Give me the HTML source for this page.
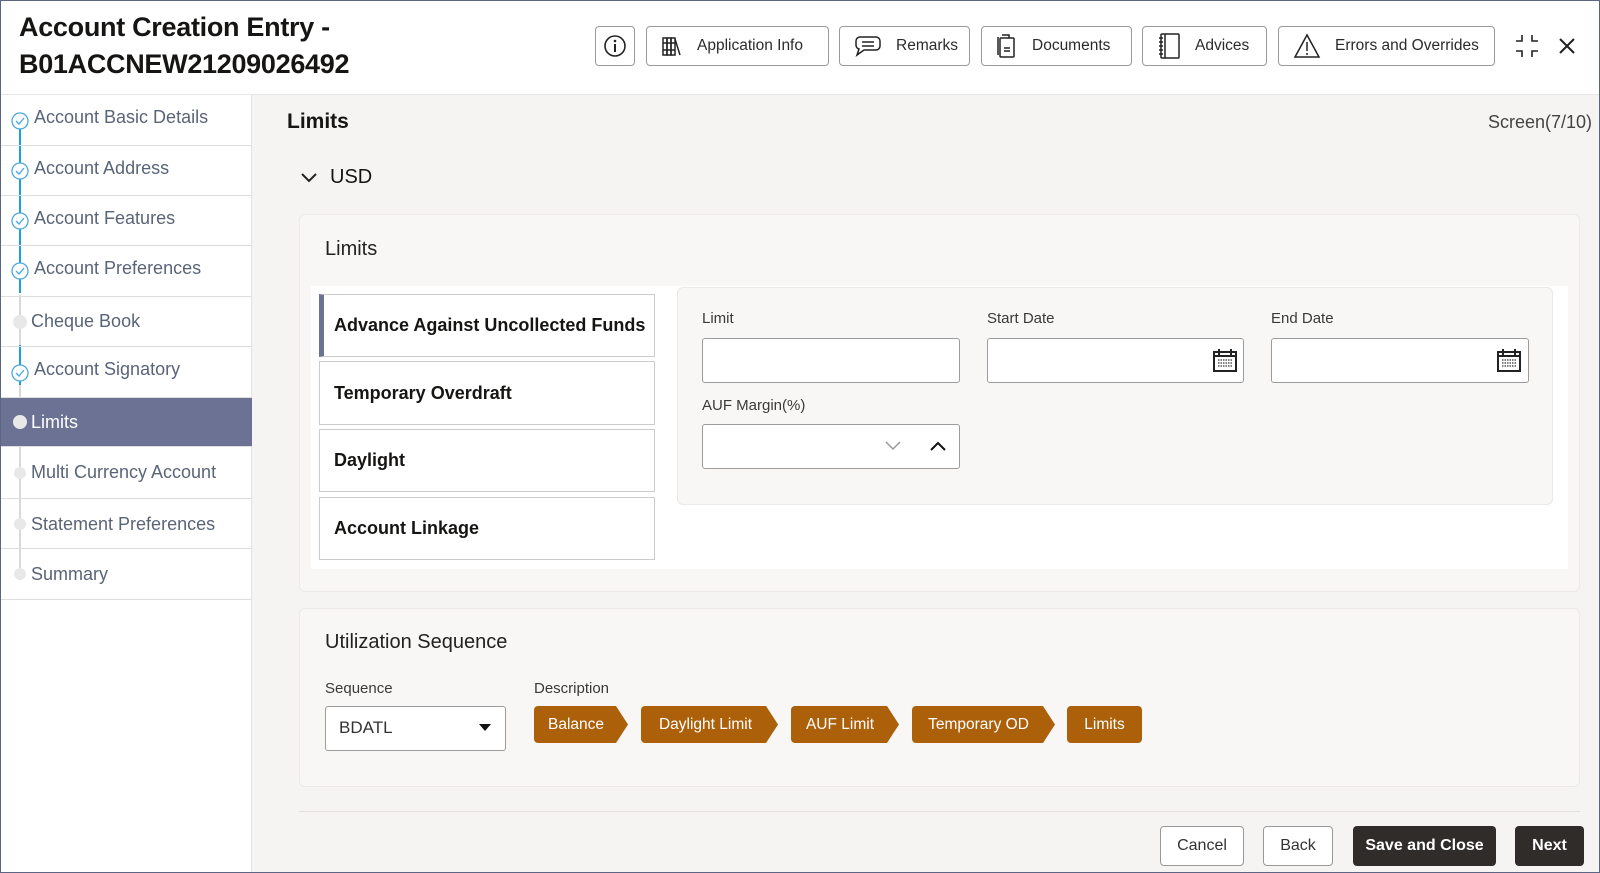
<!DOCTYPE html>
<html><head><meta charset="utf-8"><style>
*{box-sizing:border-box;margin:0;padding:0}
body{width:1600px;height:873px;overflow:hidden;font-family:"Liberation Sans",sans-serif;background:#fff;position:relative;color:#161513}
.a{position:absolute}
.frame{left:0;top:0;width:1600px;height:873px;border:1px solid #5d6585;pointer-events:none;z-index:9}
.hb{position:absolute;top:26px;height:40px;border:1px solid #9a9a9a;border-radius:4px;background:#fff;display:flex;align-items:center;font-size:15.5px;color:#2b2b2b}
.hb svg{margin:0 14px 0 14px}
.side{left:0;top:95px;width:252px;height:778px;background:#fff;border-right:1px solid #e3e3e3}
.si{position:absolute;left:0;width:252px;height:50px;border-bottom:1px solid #ddd;font-size:18px;color:#5a6478;}
.si span{position:absolute;left:34px;top:12px}
.main{left:252px;top:95px;width:1348px;height:778px;background:#f5f4f2}
.card{background:#f8f7f6;border:1px solid #ece9e6;border-radius:6px}
.tab{position:absolute;left:319px;width:336px;border:1px solid #ccc;background:#fff;font-size:18px;font-weight:bold;padding-left:14px;display:flex;align-items:center}
.lbl{position:absolute;font-size:15px;color:#3a3a3a}
.inp{position:absolute;height:45px;border:1px solid #9c9c9c;border-radius:3px;background:#fff}
.tag{position:absolute;top:706px;height:37px;background:#ad600a;color:#fff;font-size:15.5px;display:flex;align-items:center;justify-content:center;border-radius:4px 0 0 4px;clip-path:polygon(0 0,calc(100% - 12px) 0,100% 50%,calc(100% - 12px) 100%,0 100%)}
.fb{position:absolute;top:826px;height:40px;border-radius:4px;font-size:16px;display:flex;align-items:center;justify-content:center}
</style></head><body>
<div class="a frame"></div>
<div class="a" style="left:19px;top:9px;font-size:27px;font-weight:bold;line-height:37px;color:#161513;letter-spacing:-0.3px">Account Creation Entry -<br>B01ACCNEW21209026492</div>

<div class="hb" style="left:595px;width:40px;justify-content:center"><svg style="margin:0" width="24" height="24" viewBox="0 0 24 24"><circle cx="12" cy="12" r="10" fill="none" stroke="#222" stroke-width="1.6"/><circle cx="12" cy="7" r="1.3" fill="#222"/><path d="M12 10v8" stroke="#222" stroke-width="2"/></svg></div>
<div class="hb" style="left:646px;width:183px"><svg width="22" height="22" viewBox="0 0 22 22" fill="none" stroke="#222" stroke-width="1.5"><rect x="2" y="3" width="4" height="17"/><rect x="6" y="3" width="4" height="17"/><rect x="10" y="3" width="4" height="17"/><path d="M14 4l5 16"/><path d="M2 8h12M2 15h12"/></svg>Application Info</div>
<div class="hb" style="left:839px;width:131px"><svg width="28" height="22" viewBox="0 0 28 22" fill="none" stroke="#222" stroke-width="1.5"><path d="M6 2h16a4 4 0 014 4v5a4 4 0 01-4 4H10l-7 5 2-6a4 4 0 01-3-4V6a4 4 0 014-4z"/><path d="M8 7h12M8 11h12"/></svg>Remarks</div>
<div class="hb" style="left:981px;width:151px"><svg width="22" height="26" viewBox="0 0 22 26" fill="none" stroke="#222" stroke-width="1.5"><path d="M6 2h7v3"/><rect x="4" y="5" width="14" height="19" rx="1"/><path d="M2 4v18M8 15h6M8 18h6"/></svg>Documents</div>
<div class="hb" style="left:1142px;width:125px"><svg width="24" height="28" viewBox="0 0 24 28" fill="none" stroke="#222" stroke-width="1.5"><rect x="4" y="2" width="18" height="24" rx="1"/><path d="M8 2v24M2 6h4M2 10h4M2 14h4M2 18h4M2 22h4"/></svg>Advices</div>
<div class="hb" style="left:1278px;width:217px"><svg width="28" height="26" viewBox="0 0 28 26" fill="none" stroke="#222" stroke-width="1.5"><path d="M14 2L2 24h24z"/><path d="M14 9v9M14 20v2"/></svg>Errors and Overrides</div>
<svg class="a" style="left:1514px;top:33px" width="26" height="26" viewBox="0 0 26 26" fill="none" stroke="#222" stroke-width="1.6"><path d="M8 2v6H2M18 2v6h6M8 24v-6H2M18 24v-6h6"/></svg>
<svg class="a" style="left:1558px;top:37px" width="18" height="18" viewBox="0 0 18 18" stroke="#222" stroke-width="2"><path d="M2 2l14 14M16 2L2 16"/></svg>
<div class="a" style="left:0;top:94px;width:1600px;height:1px;background:#e6e6e6"></div>

<div class="a side">
<div class="a" style="left:19px;top:18px;width:2px;height:180px;background:#1aa0e0"></div>
<div class="a" style="left:19px;top:200px;width:2px;height:280px;background:#d8d8d8"></div>
<div class="a" style="left:19px;top:250px;width:2px;height:40px;background:#1aa0e0"></div>
</div>
<div class="si" style="top:95px;height:51px"><span>Account Basic Details</span></div>
<div class="si" style="top:146px"><span>Account Address</span></div>
<div class="si" style="top:196px"><span>Account Features</span></div>
<div class="si" style="top:246px;height:51px"><span>Account Preferences</span></div>
<div class="si" style="top:297px"><span style="left:31px;top:14px">Cheque Book</span></div>
<div class="si" style="top:347px;height:51px"><span>Account Signatory</span></div>
<div class="si" style="top:398px;height:49px;background:#6b7294;color:#fff"><span style="left:31px;top:14px">Limits</span></div>
<div class="si" style="top:447px;height:52px"><span style="left:31px;top:15px">Multi Currency Account</span></div>
<div class="si" style="top:499px"><span style="left:31px;top:15px">Statement Preferences</span></div>
<div class="si" style="top:549px;height:51px"><span style="left:31px;top:15px">Summary</span></div>
<svg class="a" style="left:10px;top:110px" width="20" height="300" viewBox="0 0 20 300" fill="#fff" stroke="#4aa8e0" stroke-width="1.3">
<g><circle cx="10" cy="11" r="8"/><path d="M6 11l3 3 5-6" fill="none"/></g>
<g transform="translate(0,50)"><circle cx="10" cy="11" r="8"/><path d="M6 11l3 3 5-6" fill="none"/></g>
<g transform="translate(0,100)"><circle cx="10" cy="11" r="8"/><path d="M6 11l3 3 5-6" fill="none"/></g>
<g transform="translate(0,150)"><circle cx="10" cy="11" r="8"/><path d="M6 11l3 3 5-6" fill="none"/></g>
<circle cx="10" cy="212" r="7" fill="#e8e8e8" stroke="none"/>
<g transform="translate(0,252)"><circle cx="10" cy="11" r="8"/><path d="M6 11l3 3 5-6" fill="none"/></g>
</svg>
<svg class="a" style="left:10px;top:410px" width="20" height="180"><circle cx="10" cy="12" r="7" fill="#e8e8e8"/><circle cx="10" cy="63" r="6" fill="#e8e8e8"/><circle cx="10" cy="114" r="6" fill="#e8e8e8"/><circle cx="10" cy="164" r="6" fill="#e8e8e8"/></svg>
<div class="a" style="left:257px;top:456px;width:7px;height:106px;background:#ececec;border:1px solid #ddd"></div>

<div class="a main"></div>
<div class="a" style="left:287px;top:110px;font-size:21px;font-weight:bold">Limits</div>
<div class="a" style="left:1488px;top:112px;font-size:18px;color:#444">Screen(7/10)</div>
<svg class="a" style="left:300px;top:170px" width="18" height="14"><path d="M2 4l7 7 7-7" stroke="#222" stroke-width="2" fill="none"/></svg>
<div class="a" style="left:330px;top:166px;font-size:20px">USD</div>

<div class="a card" style="left:299px;top:214px;width:1281px;height:378px"></div>
<div class="a" style="left:325px;top:238px;font-size:20px;color:#222">Limits</div>
<div class="a" style="left:311px;top:286px;width:1257px;height:283px;background:#fff"></div>
<div class="tab" style="top:294px;height:63px;border-left:5px solid #6b7294;padding-left:10px">Advance Against Uncollected Funds</div>
<div class="tab" style="top:361px;height:64px">Temporary Overdraft</div>
<div class="tab" style="top:429px;height:63px">Daylight</div>
<div class="tab" style="top:497px;height:63px">Account Linkage</div>
<div class="a card" style="left:677px;top:287px;width:876px;height:218px"></div>
<div class="lbl" style="left:702px;top:310px">Limit</div>
<div class="lbl" style="left:987px;top:310px">Start Date</div>
<div class="lbl" style="left:1271px;top:310px">End Date</div>
<div class="inp" style="left:702px;top:338px;width:258px"></div>
<div class="inp" style="left:987px;top:338px;width:257px"></div>
<div class="inp" style="left:1271px;top:338px;width:258px"></div>
<svg class="a" style="left:1212px;top:347px" width="26" height="26" viewBox="0 0 26 26"><rect x="2" y="5" width="22" height="19" fill="#fff" stroke="#222" stroke-width="2"/><path d="M2 9h22" stroke="#222" stroke-width="2"/><path d="M7 2v6M19 2v6" stroke="#222" stroke-width="2"/><path d="M6 13h14M6 16h14M6 19h14" stroke="#555" stroke-width="1.5" stroke-dasharray="1.5 1"/></svg>
<svg class="a" style="left:1496px;top:347px" width="26" height="26" viewBox="0 0 26 26"><rect x="2" y="5" width="22" height="19" fill="#fff" stroke="#222" stroke-width="2"/><path d="M2 9h22" stroke="#222" stroke-width="2"/><path d="M7 2v6M19 2v6" stroke="#222" stroke-width="2"/><path d="M6 13h14M6 16h14M6 19h14" stroke="#555" stroke-width="1.5" stroke-dasharray="1.5 1"/></svg>
<div class="lbl" style="left:702px;top:397px">AUF Margin(%)</div>
<div class="inp" style="left:702px;top:424px;width:258px"></div>
<svg class="a" style="left:884px;top:440px" width="18" height="12"><path d="M2 2l7 7 7-7" stroke="#999" stroke-width="1.5" fill="none"/></svg>
<svg class="a" style="left:929px;top:440px" width="18" height="12"><path d="M2 10l7-7 7 7" stroke="#111" stroke-width="2" fill="none"/></svg>

<div class="a card" style="left:299px;top:608px;width:1281px;height:179px"></div>
<div class="a" style="left:325px;top:631px;font-size:20px;color:#222">Utilization Sequence</div>
<div class="lbl" style="left:325px;top:680px">Sequence</div>
<div class="lbl" style="left:534px;top:680px">Description</div>
<div class="inp" style="left:325px;top:706px;width:181px"></div>
<div class="a" style="left:339px;top:718px;font-size:17px;color:#333">BDATL</div>
<svg class="a" style="left:478px;top:723px" width="14" height="10"><path d="M1 1h12L7 8z" fill="#111"/></svg>
<div class="tag" style="left:534px;width:94px;padding-right:10px">Balance</div>
<div class="tag" style="left:641px;width:137px;padding-right:8px">Daylight Limit</div>
<div class="tag" style="left:791px;width:108px;padding-right:10px">AUF Limit</div>
<div class="tag" style="left:912px;width:143px;padding-right:10px">Temporary OD</div>
<div class="tag" style="left:1067px;width:75px;clip-path:none;border-radius:4px">Limits</div>

<div class="a" style="left:299px;top:811px;width:1281px;height:1px;background:#e3e0dd"></div>
<div class="fb" style="left:1160px;width:84px;border:1px solid #999;background:#fff;color:#333">Cancel</div>
<div class="fb" style="left:1263px;width:70px;border:1px solid #999;background:#fff;color:#333">Back</div>
<div class="fb" style="left:1353px;width:143px;background:#2f2c2a;color:#fff;font-weight:bold">Save and Close</div>
<div class="fb" style="left:1515px;width:69px;background:#2f2c2a;color:#fff;font-weight:bold">Next</div>
</body></html>
